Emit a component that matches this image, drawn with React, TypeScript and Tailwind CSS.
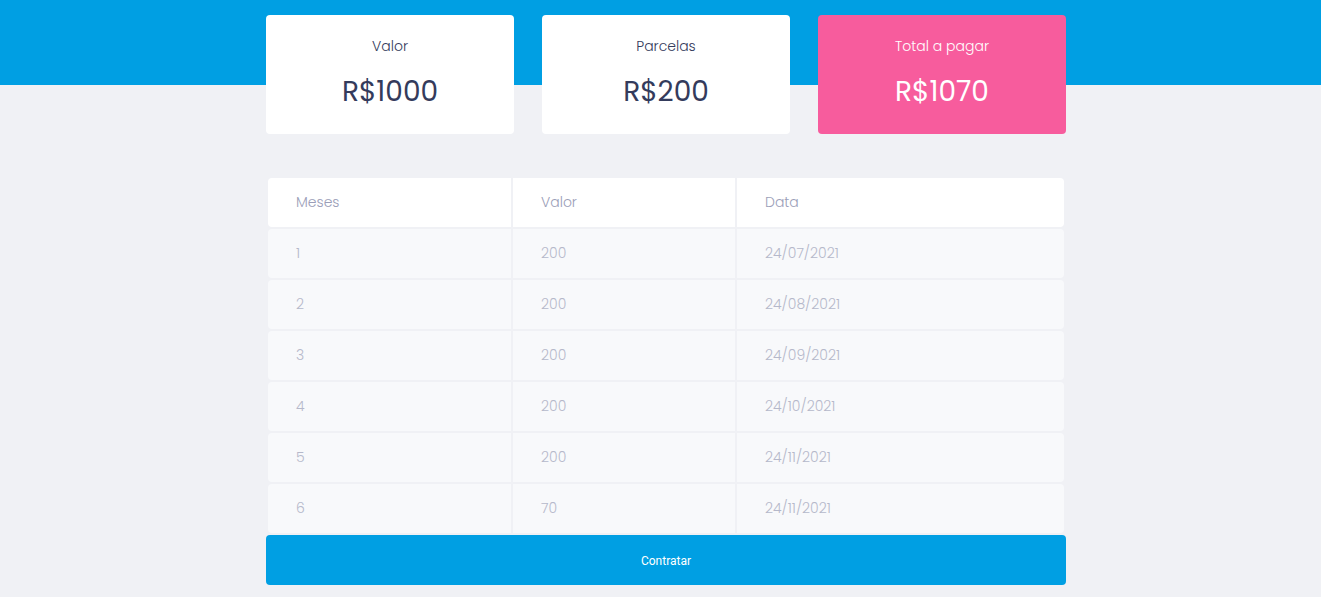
import React from 'react';

const rows = [
    { mes: 1, valor: 200, data: '24/07/2021' },
    { mes: 2, valor: 200, data: '24/08/2021' },
    { mes: 3, valor: 200, data: '24/09/2021' },
    { mes: 4, valor: 200, data: '24/10/2021' },
    { mes: 5, valor: 200, data: '24/11/2021' },
    { mes: 6, valor: 70, data: '24/11/2021' },
];

const Card: React.FC<{ label: string; value: string; pink?: boolean }> = ({ label, value, pink }) => (
    <div
        className={
            pink
                ? 'h-[119px] rounded-[4px] bg-[#f75c9d] text-white flex flex-col items-center pt-[22px]'
                : 'h-[119px] rounded-[4px] bg-white text-[#343b5c] flex flex-col items-center pt-[22px]'
        }
    >
        <span className="text-[14px] leading-[18px] font-light">{label}</span>
        <span className="text-[28px] leading-[34px] mt-[20px]">{value}</span>
    </div>
);

export default function App() {
    return (
        <div className="min-h-screen pl-[11px] bg-[linear-gradient(#009fe3_85px,#f0f1f5_85px)] font-['Poppins','Noto_Sans',sans-serif]">
            <div className="w-[800px] mx-auto pt-[15px] pb-[12px]">
                <div className="grid grid-cols-3 gap-[28px]">
                    <Card label="Valor" value="R$1000" />
                    <Card label="Parcelas" value="R$200" />
                    <Card label="Total a pagar" value="R$1070" pink />
                </div>

                <table className="w-full mt-[42px] border-separate border-spacing-[2px] text-[14px] font-light">
                    <thead>
                        <tr className="bg-white text-[#9b9eb8]">
                            <th className="w-[243px] h-[49px] pl-[28px] text-left font-light rounded-l-[4px]">Meses</th>
                            <th className="w-[222px] h-[49px] pl-[28px] text-left font-light">Valor</th>
                            <th className="h-[49px] pl-[28px] text-left font-light rounded-r-[4px]">Data</th>
                        </tr>
                    </thead>
                    <tbody>
                        {rows.map((r) => (
                            <tr key={r.mes} className="bg-[#f8f9fb] text-[#b5b8ca]">
                                <td className="h-[49px] pl-[28px] rounded-l-[4px]">{r.mes}</td>
                                <td className="h-[49px] pl-[28px]">{r.valor}</td>
                                <td className="h-[49px] pl-[28px] rounded-r-[4px]">{r.data}</td>
                            </tr>
                        ))}
                    </tbody>
                </table>

                <button className="w-full h-[50px] pt-[1px] rounded-[4px] bg-[#009fe3] text-white text-[12px] font-['Roboto',sans-serif]">
                    Contratar
                </button>
            </div>
        </div>
    );
}
